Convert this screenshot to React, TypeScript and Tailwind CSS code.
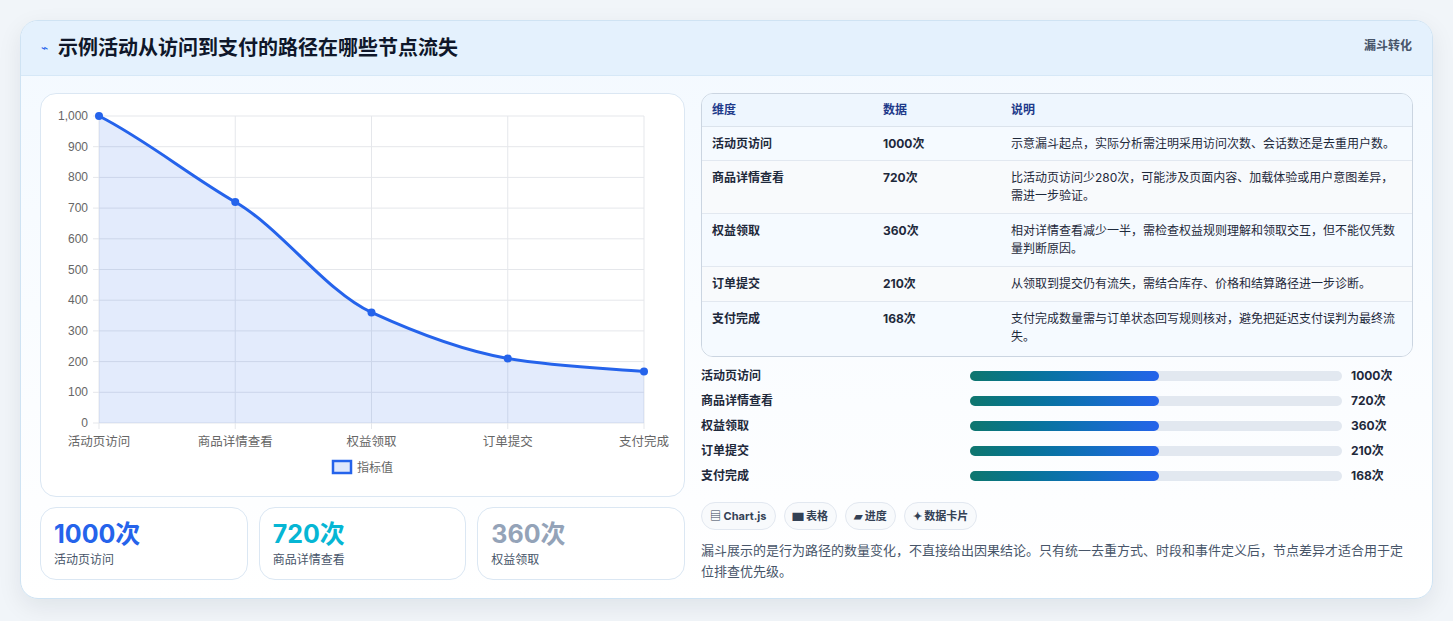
const rows = [
  { k: '活动页访问', v: '1000次', d: '示意漏斗起点，实际分析需注明采用访问次数、会话数还是去重用户数。', h: 'h-[34px]' },
  { k: '商品详情查看', v: '720次', d: '比活动页访问少280次，可能涉及页面内容、加载体验或用户意图差异，需进一步验证。', h: 'h-[53px]' },
  { k: '权益领取', v: '360次', d: '相对详情查看减少一半，需检查权益规则理解和领取交互，但不能仅凭数量判断原因。', h: 'h-[53px]' },
  { k: '订单提交', v: '210次', d: '从领取到提交仍有流失，需结合库存、价格和结算路径进一步诊断。', h: 'h-[35px]' },
  { k: '支付完成', v: '168次', d: '支付完成数量需与订单状态回写规则核对，避免把延迟支付误判为最终流失。', h: 'h-[54px]' },
];
const vals = [1000, 720, 360, 210, 168];
const labels = ['活动页访问', '商品详情查看', '权益领取', '订单提交', '支付完成'];

function Chart() {
  const x0 = 58, x1 = 603, y0 = 22, y1 = 329;
  const xs = vals.map((_, i) => x0 + ((x1 - x0) * i) / 4);
  const ys = vals.map((v) => y1 - ((y1 - y0) * v) / 1000);
  let d = `M${xs[0]},${ys[0]}`;
  for (let i = 1; i < 5; i++) {
    const dx = (xs[i] - xs[i - 1]) / 3;
    const s0 = i === 1 ? (ys[1] - ys[0]) / (xs[1] - xs[0]) : (ys[i] - ys[i - 2]) / (xs[i] - xs[i - 2]);
    const s1 = i === 4 ? (ys[4] - ys[3]) / (xs[4] - xs[3]) : (ys[i + 1] - ys[i - 1]) / (xs[i + 1] - xs[i - 1]);
    d += ` C${xs[i - 1] + dx},${ys[i - 1] + s0 * dx * 0.8} ${xs[i] - dx},${ys[i] - s1 * dx * 0.8} ${xs[i]},${ys[i]}`;
  }
  return (
    <svg width="644" height="400" style={{ fontFamily: 'Liberation Sans, Noto Sans CJK SC, sans-serif' }}>
      {Array.from({ length: 11 }).map((_, i) => {
        const y = y0 + ((y1 - y0) * i) / 10;
        return (
          <g key={i}>
            <line x1={x0 - 6} x2={x1} y1={y} y2={y} stroke="#e5e7eb" />
            <text x={x0 - 11} y={y + 4} fontSize="12" fill="#666" textAnchor="end">
              {(1000 - i * 100).toLocaleString('en-US')}
            </text>
          </g>
        );
      })}
      {xs.map((x, i) => (
        <g key={i}>
          <line x1={x} x2={x} y1={y0} y2={y1 + 6} stroke="#e5e7eb" />
          <text x={x} y={352} fontSize="12.5" fill="#666" textAnchor="middle">{labels[i]}</text>
        </g>
      ))}
      <path d={`${d} L${x1},${y1} L${x0},${y1} Z`} fill="rgba(37,99,235,0.13)" />
      <path d={d} fill="none" stroke="#2563eb" strokeWidth="3" />
      {xs.map((x, i) => (
        <circle key={i} cx={x} cy={ys[i]} r="4" fill="#2563eb" />
      ))}
      <rect x="292" y="367" width="18" height="12" fill="rgba(37,99,235,0.15)" stroke="#2563eb" strokeWidth="2.5" />
      <text x="316" y="378" fontSize="12" fill="#666">指标值</text>
    </svg>
  );
}

function Stat({ v, l, c }: { v: string; l: string; c: string }) {
  return (
    <div className="flex-1 h-[73px] rounded-2xl border border-[#dbe7f3] bg-white px-[13px] pt-[9px]">
      <div className={`text-[25px] font-bold leading-[34px] ${c}`}>{v}</div>
      <div className="text-[12px] text-[#475569] leading-[18px]">{l}</div>
    </div>
  );
}

export default function App() {
  return (
    <div className="w-[1453px] h-[621px] bg-[#f1f5f9] pt-[20px] pl-[20px]" style={{ fontFamily: 'Inter, "Noto Sans CJK SC", sans-serif' }}>
      <div className="w-[1413px] h-[579px] rounded-[18px] border border-[#cfe3f3] bg-gradient-to-b from-[#f3f9ff] to-white shadow-[0_8px_24px_rgba(15,23,42,0.08)] overflow-hidden">
        <div className="h-[55px] flex items-center justify-between px-[20px] bg-[#e4f1fd] border-b border-[#d6e8f7]">
          <div className="flex items-center gap-[10px]">
            <span className="text-[12px] text-[#2563eb]">⌁</span>
            <span className="text-[20px] font-bold text-[#0f172a]">示例活动从访问到支付的路径在哪些节点流失</span>
          </div>
          <span className="text-[12px] font-bold text-[#475569] self-start mt-[16px]">漏斗转化</span>
        </div>
        <div className="flex gap-[16px] px-[19px] pt-[17px]">
          <div className="w-[645px] flex flex-col gap-[10px]">
            <div className="h-[404px] rounded-2xl border border-[#dbe7f3] bg-white">
              <Chart />
            </div>
            <div className="flex gap-[11px]">
              <Stat v="1000次" l="活动页访问" c="text-[#2563eb]" />
              <Stat v="720次" l="商品详情查看" c="text-[#06b6d4]" />
              <Stat v="360次" l="权益领取" c="text-[#94a3b8]" />
            </div>
          </div>
          <div className="w-[713px] flex flex-col">
            <div className="rounded-xl border border-[#cbd5e1] overflow-hidden text-[12px]">
              <div className="flex h-[33px] items-center bg-[#eef6fe] text-[#1e3a8a] font-bold border-b border-[#dbe3ec]">
                <div className="w-[181px] pl-[10px]">维度</div>
                <div className="w-[128px]">数据</div>
                <div className="flex-1">说明</div>
              </div>
              {rows.map((r, i) => (
                <div key={i} className={`flex ${r.h} pt-[8px] text-[#1e293b] ${i % 2 ? 'bg-[#f8fafc]' : 'bg-[#f5faff]'} ${i < 4 ? 'border-b border-[#e2e8f0]' : ''}`}>
                  <div className="w-[181px] pl-[10px] font-bold">{r.k}</div>
                  <div className="w-[128px] font-bold">{r.v}</div>
                  <div className="flex-1 pr-[10px] leading-[18px]">{r.d}</div>
                </div>
              ))}
            </div>
            <div className="flex flex-col gap-[7px] mt-[10px]">
              {rows.map((r, i) => (
                <div key={i} className="flex items-center h-[18px] text-[12px] font-bold text-[#1e293b]">
                  <div className="w-[269px]">{r.k}</div>
                  <div className="w-[372px] h-[10px] rounded-full bg-[#e2e8f0]">
                    <div className="w-[189px] h-full rounded-full bg-gradient-to-r from-[#0f766e] to-[#2563eb]" />
                  </div>
                  <div className="pl-[9px]">{r.v}</div>
                </div>
              ))}
            </div>
            <div className="flex gap-[8px] mt-[17px] text-[11px] font-bold text-[#334155]">
              {['▤ Chart.js', '▆ 表格', '▰ 进度', '✦ 数据卡片'].map((t) => (
                <span key={t} className="h-[28px] px-[8px] flex items-center rounded-full border border-[#e2e8f0] bg-[#f8fafc]">{t}</span>
              ))}
            </div>
            <p className="mt-[10px] text-[13px] leading-[21px] text-[#475569]">
              漏斗展示的是行为路径的数量变化，不直接给出因果结论。只有统一去重方式、时段和事件定义后，节点差异才适合用于定位排查优先级。
            </p>
          </div>
        </div>
      </div>
    </div>
  );
}
